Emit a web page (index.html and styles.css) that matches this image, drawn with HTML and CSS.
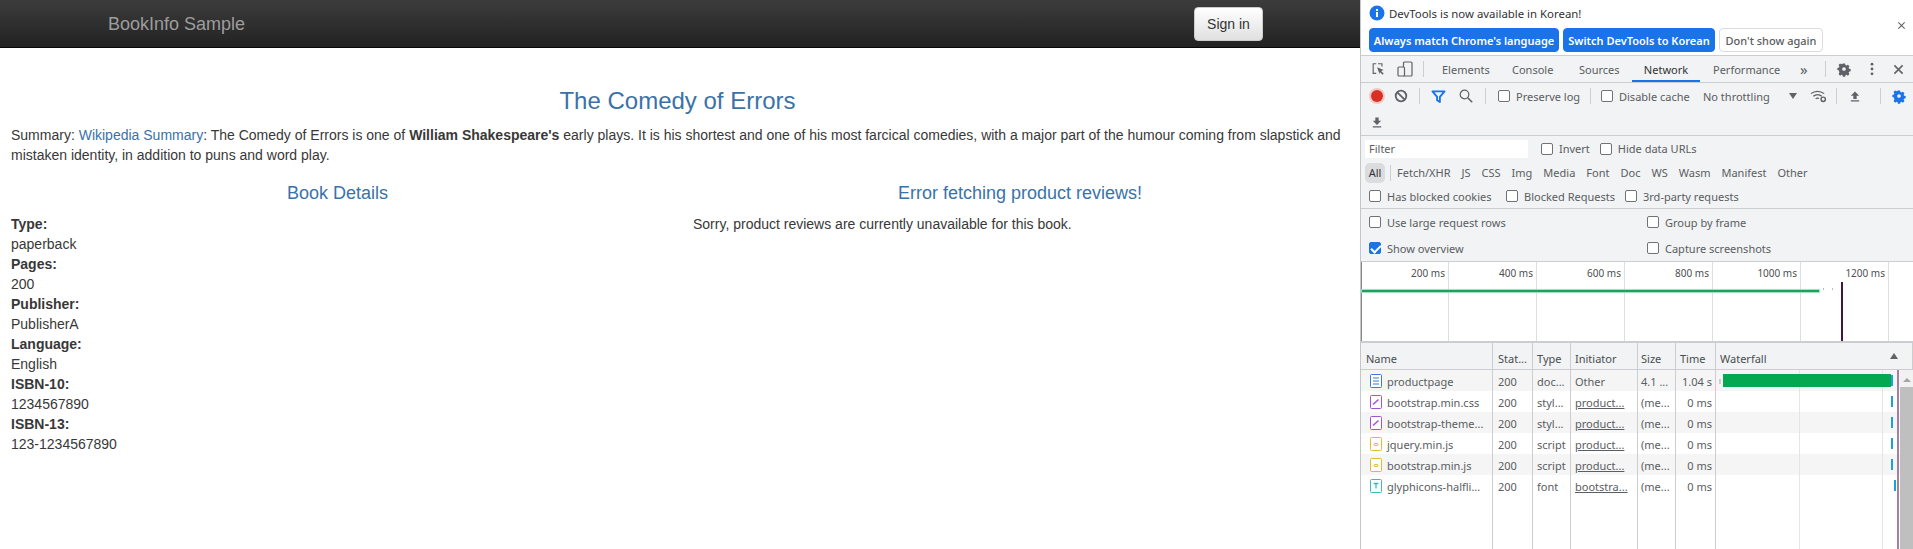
FILE: index.html
```html
<!DOCTYPE html>
<html lang="en">
<head>
<meta charset="utf-8">
<title>Simple Bookstore App</title>
<link rel="stylesheet" href="styles.css">
</head>
<body>
<div class="app">
  <main class="page">
    <nav class="navbar">
      <span class="brand">BookInfo Sample</span>
      <button class="signin">Sign in</button>
    </nav>
    <h3 class="title">The Comedy of Errors</h3>
    <p class="summary">Summary: <a class="link">Wikipedia Summary</a>: The Comedy of Errors is one of <b>William Shakespeare's</b> early plays. It is his shortest and one of his most farcical comedies, with a major part of the humour coming from slapstick and mistaken identity, in addition to puns and word play.</p>
    <div class="cols">
      <section class="col-left">
        <h4 class="sub">Book Details</h4>
        <dl class="details">
          <dt>Type:</dt><dd>paperback</dd>
          <dt>Pages:</dt><dd>200</dd>
          <dt>Publisher:</dt><dd>PublisherA</dd>
          <dt>Language:</dt><dd>English</dd>
          <dt>ISBN-10:</dt><dd>1234567890</dd>
          <dt>ISBN-13:</dt><dd>123-1234567890</dd>
        </dl>
      </section>
      <section class="col-right">
        <h4 class="sub">Error fetching product reviews!</h4>
        <p class="sorry">Sorry, product reviews are currently unavailable for this book.</p>
      </section>
    </div>
  </main>

  <aside class="devtools">
    <div class="infobar">
      <div class="info-line">
        <svg class="ic-info" viewBox="0 0 16 16"><circle cx="8" cy="8" r="7.5" fill="#1a73e8"/><rect x="7" y="7" width="2" height="5" fill="#fff"/><rect x="7" y="4" width="2" height="2" fill="#fff"/></svg>
        <span>DevTools is now available in Korean!</span>
      </div>
      <div class="info-btns">
        <button class="ibtn primary b1">Always match Chrome's language</button>
        <button class="ibtn primary b2">Switch DevTools to Korean</button>
        <button class="ibtn plain">Don't show again</button>
      </div>
      <svg class="info-close" viewBox="0 0 10 10"><path d="M1.5 1.5l7 7M8.5 1.5l-7 7" stroke="#5f6368" stroke-width="1.2" fill="none"/></svg>
    </div>

    <div class="tabs">
      <svg class="ic i-inspect" viewBox="0 0 16 16"><path d="M6 2H2.5v11H6M8 2h4.5v3" fill="none" stroke="#5f6368" stroke-width="1.3"/><path d="M7 6l7.5 3-3 1.2 3 3-1.3 1.3-3-3L9.800 14z" fill="#5f6368"/></svg>
      <svg class="ic i-device" viewBox="0 0 16 16"><rect x="6.500" y="1" width="8.500" height="14" rx="1" fill="none" stroke="#5f6368" stroke-width="1.200"/><rect x="1" y="6" width="6.500" height="9" rx="1" fill="#f1f3f4" stroke="#5f6368" stroke-width="1.200"/></svg>
      <i class="sep s-tabs"></i>
      <span class="tab t1">Elements</span>
      <span class="tab t2">Console</span>
      <span class="tab t3">Sources</span>
      <span class="tab active">Network</span>
      <span class="tab t5">Performance</span>
      <span class="more">»</span>
      <i class="sep s-more"></i>
      <svg class="ic i-gear" viewBox="0 0 16 16"><path fill="#5f6368" fill-rule="evenodd" d="M6.600 1h2.800l.4 2 1.300.6 1.800-1 1.900 2-1 1.700.5 1.300 2 .5v2.800l-2 .4-.5 1.300 1 1.700-1.900 2-1.800-1-1.300.5-.4 2H6.600l-.4-2-1.300-.5-1.800 1-1.900-2 1-1.700L1.700 9.800l-2-.4V6.600l2-.5.500-1.300-1-1.700 1.900-2 1.800 1 1.300-.6zM8 5.700a2.300 2.300 0 1 0 0 4.600 2.300 2.300 0 0 0 0-4.600z" transform="translate(1.600 1.600) scale(.8)"/></svg>
      <svg class="ic i-dots" viewBox="0 0 4 16"><circle cx="2" cy="2.500" r="1.600" fill="#5f6368"/><circle cx="2" cy="8" r="1.600" fill="#5f6368"/><circle cx="2" cy="13.500" r="1.600" fill="#5f6368"/></svg>
      <svg class="ic i-x" viewBox="0 0 12 12"><path d="M1.500 1.500l9 9M10.500 1.500l-9 9" stroke="#5f6368" stroke-width="1.700" fill="none"/></svg>
    </div>

    <div class="toolbar">
      <div class="tb-row">
        <span class="rec"></span>
        <svg class="ic i-clear" viewBox="0 0 14 14"><circle cx="7" cy="7" r="5.300" fill="none" stroke="#5f6368" stroke-width="1.800"/><path d="M3.300 3.300l7.400 7.400" stroke="#5f6368" stroke-width="1.800"/></svg>
        <i class="sep s1"></i>
        <svg class="ic i-filter" viewBox="0 0 16 14"><path d="M1.500 1.500h13L9.500 7.500V13l-3-2V7.500z" fill="none" stroke="#1a73e8" stroke-width="2" stroke-linejoin="round"/></svg>
        <svg class="ic i-search" viewBox="0 0 14 14"><circle cx="5.500" cy="5.500" r="4.300" fill="none" stroke="#5f6368" stroke-width="1.200"/><path d="M8.700 8.700l4.500 4.500" stroke="#5f6368" stroke-width="1.600"/></svg>
        <i class="sep s2"></i>
        <label class="chk c-preserve"><i class="box"></i>Preserve log</label>
        <i class="sep s3"></i>
        <label class="chk c-cache"><i class="box"></i>Disable cache</label>
        <span class="throttle">No throttling</span>
        <span class="caret"></span>
        <svg class="ic i-wifi" viewBox="0 0 18 14"><path d="M1 4.500a11 11 0 0 1 14 0M3.500 7.300a7 7 0 0 1 9 0M6 10a3.300 3.300 0 0 1 3.500-.5" fill="none" stroke="#5f6368" stroke-width="1.300"/><circle cx="14" cy="10.500" r="2.300" fill="none" stroke="#5f6368" stroke-width="1.500"/></svg>
        <i class="sep s4"></i>
        <svg class="ic i-up" viewBox="0 0 12 12"><path d="M6 0L11 5H8v4H4V5H1z M1 10.500h10V12H1z" fill="#5f6368"/></svg>
        <i class="sep s5"></i>
        <svg class="ic i-gearblue" viewBox="0 0 16 16"><path fill="#1a73e8" fill-rule="evenodd" d="M6.600 1h2.800l.4 2 1.300.6 1.800-1 1.900 2-1 1.700.5 1.300 2 .5v2.800l-2 .4-.5 1.300 1 1.700-1.900 2-1.800-1-1.300.5-.4 2H6.600l-.4-2-1.300-.5-1.800 1-1.900-2 1-1.700L1.700 9.800l-2-.4V6.600l2-.5.500-1.300-1-1.700 1.900-2 1.800 1 1.300-.6zM8 5.700a2.300 2.300 0 1 0 0 4.600 2.300 2.300 0 0 0 0-4.600z" transform="translate(1.600 1.600) scale(.8)"/></svg>
      </div>
      <div class="tb-row">
        <svg class="ic i-down" viewBox="0 0 12 12"><path d="M4 0h4v4h3L6 9 1 4h3z M1 10.500h10V12H1z" fill="#5f6368"/></svg>
      </div>
    </div>

    <div class="filters">
      <div class="f-row f-a">
        <span class="filter-input">Filter</span>
        <label class="chk c-invert"><i class="box"></i>Invert</label>
        <label class="chk c-hide"><i class="box"></i>Hide data URLs</label>
      </div>
      <div class="f-row f-b">
        <span class="pill">All</span>
        <i class="sep s-pill"></i>
        <span class="ty">Fetch/XHR</span><span class="ty">JS</span><span class="ty">CSS</span><span class="ty">Img</span><span class="ty">Media</span><span class="ty">Font</span><span class="ty">Doc</span><span class="ty">WS</span><span class="ty">Wasm</span><span class="ty">Manifest</span><span class="ty">Other</span>
      </div>
      <div class="f-row f-c">
        <label class="chk c-cookies"><i class="box"></i>Has blocked cookies</label>
        <label class="chk c-req"><i class="box"></i>Blocked Requests</label>
        <label class="chk"><i class="box"></i>3rd-party requests</label>
      </div>
    </div>

    <div class="settings">
      <label class="chk"><i class="box"></i>Use large request rows</label>
      <label class="chk"><i class="box"></i>Group by frame</label>
      <label class="chk"><i class="box on"></i>Show overview</label>
      <label class="chk"><i class="box"></i>Capture screenshots</label>
    </div>

    <div class="overview">
      <div class="ticks">
        <span>200 ms</span><span>400 ms</span><span>600 ms</span><span>800 ms</span><span>1000 ms</span><span>1200 ms</span>
      </div>
      <i class="ov-green"></i>
      <i class="ov-dot d1"></i><i class="ov-dot d2"></i>
      <i class="ov-line"></i>
    </div>

    <div class="net">
      <div class="row head">
        <span>Name</span><span>Stat...</span><span>Type</span><span>Initiator</span><span>Size</span><span>Time</span>
        <span class="wf">Waterfall<i class="sort"></i></span>
      </div>
      <div class="row odd">
        <span class="nm"><svg class="fi" viewBox="0 0 12 14"><rect x=".5" y=".5" width="11" height="13" rx="1" fill="#fff" stroke="#3b78d8"/><path d="M3 4h6M3 7h6M3 10h6" stroke="#3b78d8"/></svg>productpage</span><span>200</span><span>doc...</span><span>Other</span><span>4.1 ...</span><span class="tm">1.04 s</span><span></span>
      </div>
      <div class="row">
        <span class="nm"><svg class="fi" viewBox="0 0 12 14"><rect x=".5" y=".5" width="11" height="13" rx="1" fill="#fff" stroke="#a254d9"/><path d="M3 9.500L8.500 4.500" stroke="#a254d9" stroke-width="1.500"/></svg>bootstrap.min.css</span><span>200</span><span>styl...</span><span><u>product...</u></span><span>(me...</span><span class="tm">0 ms</span><span></span>
      </div>
      <div class="row odd">
        <span class="nm"><svg class="fi" viewBox="0 0 12 14"><rect x=".5" y=".5" width="11" height="13" rx="1" fill="#fff" stroke="#a254d9"/><path d="M3 9.500L8.500 4.500" stroke="#a254d9" stroke-width="1.500"/></svg>bootstrap-theme...</span><span>200</span><span>styl...</span><span><u>product...</u></span><span>(me...</span><span class="tm">0 ms</span><span></span>
      </div>
      <div class="row">
        <span class="nm"><svg class="fi" viewBox="0 0 12 14"><rect x=".5" y=".5" width="11" height="13" rx="1" fill="#fff" stroke="#e8b33f"/><rect x="4" y="6.500" width="4" height="2" rx="1" fill="none" stroke="#e8b33f"/></svg>jquery.min.js</span><span>200</span><span>script</span><span><u>product...</u></span><span>(me...</span><span class="tm">0 ms</span><span></span>
      </div>
      <div class="row odd">
        <span class="nm"><svg class="fi" viewBox="0 0 12 14"><rect x=".5" y=".5" width="11" height="13" rx="1" fill="#fff" stroke="#e8b33f"/><rect x="4" y="6.500" width="4" height="2" rx="1" fill="none" stroke="#e8b33f"/></svg>bootstrap.min.js</span><span>200</span><span>script</span><span><u>product...</u></span><span>(me...</span><span class="tm">0 ms</span><span></span>
      </div>
      <div class="row">
        <span class="nm"><svg class="fi" viewBox="0 0 12 14"><rect x=".5" y=".5" width="11" height="13" rx="1" fill="#fff" stroke="#3cb8c8"/><path d="M3.500 4.500h5M6 4.500v5" stroke="#3cb8c8" stroke-width="1.300"/></svg>glyphicons-halfli...</span><span>200</span><span>font</span><span><u>bootstra...</u></span><span>(me...</span><span class="tm">0 ms</span><span></span>
      </div>
      <div class="row filler"><span></span><span></span><span></span><span></span><span></span><span></span><span></span></div>

      <div class="wf-layer">
        <i class="wf-grid g1"></i><i class="wf-grid g2"></i>
        <i class="wf-wait"></i>
        <i class="wf-green"></i>
        <i class="wf-blue b1"></i><i class="wf-blue b2"></i><i class="wf-blue b3"></i><i class="wf-blue b4"></i><i class="wf-blue b5"></i><i class="wf-blue b6"></i>
        <i class="wf-load"></i>
      </div>
      <div class="scrollbar"><i class="sb-up"></i><i class="sb-thumb"></i></div>
    </div>
  </aside>
</div>
</body>
</html>
```

FILE: styles.css
```css
* { box-sizing: border-box; }
html, body { margin: 0; padding: 0; height: 100%; overflow: hidden; background: #fff; }
.app { display: flex; height: 549px; }

/* Page */
.page { width: 1360px; flex: none; font: 14px/20px "Liberation Sans", Arial, sans-serif; color: #383838; }
.navbar { height: 48px; display: flex; align-items: center; justify-content: space-between; padding: 0 97px 0 108px; background: linear-gradient(to bottom, #3c3c3c, #222); border-bottom: 1px solid #080808; }
.brand { font-size: 18px; color: #9d9d9d; }
.signin { width: 69px; height: 34px; font: 14px "Liberation Sans", Arial, sans-serif; color: #333; background: linear-gradient(to bottom, #fff, #e0e0e0); border: 1px solid #ccc; border-radius: 4px; padding: 0; }
.title { margin: 40px 0 11px; padding-right: 5px; font-size: 24px; line-height: 26px; font-weight: 500; color: #3a72a8; text-align: center; }
.summary { margin: 0 11px 0 11px; }
.link { color: #3a72a8; }
.cols { display: flex; margin-top: 18px; }
.col-left { width: 675px; padding-left: 11px; }
.col-right { flex: 1; padding-left: 18px; padding-right: 0; margin-left: 0; }
.sub { margin: 0 0 11px; font-size: 18px; line-height: 20px; font-weight: 500; color: #3a72a8; text-align: center; }
.col-left .sub { padding-right: 11px; }
.col-right .sub { padding-right: 13px; }
.details { margin: 0; }
.details dt { font-weight: 700; }
.details dd { margin: 0; }
.sorry { margin: 0; }

/* DevTools */
.devtools { position: relative; width: 553px; flex: none; border-left: 1px solid #c4c6c9; font: 11px/14px "Noto Sans", "Open Sans", sans-serif; color: #5a5d61; background: #fff; }
.ic { display: block; flex: none; }
.sep { display: block; flex: none; width: 1px; height: 16px; background: #ccced1; }

.infobar { position: relative; height: 56px; background: #fff; border-bottom: 1px solid #cbcdd0; padding: 4px 0 0 8px; color: #303235; }
.info-line { display: flex; align-items: center; gap: 4px; height: 18px; font-size: 11.4px; }
.info-line span { padding-top: 2px; }
.ic-info { width: 16px; height: 16px; }
.info-btns { display: flex; margin-top: 6px; gap: 4px; }
.ibtn { height: 24px; padding: 0; border-radius: 4px; font: 600 11px "Noto Sans", "Open Sans", sans-serif; border: 1px solid #1a73e8; background: #1a73e8; color: #fff; white-space: nowrap; }
.ibtn.b1 { width: 190px; }
.ibtn.b2 { width: 152px; }
.ibtn.plain { width: 104px; background: #fff; color: #5a5d61; border-color: #dadce0; font-weight: 500; }
.info-close { position: absolute; right: 7px; top: 21px; width: 9px; height: 9px; }

.tabs { height: 27px; display: flex; align-items: center; background: #f1f3f4; border-bottom: 1px solid #cbcdd0; }
.i-inspect { width: 14px; height: 14px; margin-left: 10px; }
.i-device { width: 16px; height: 16px; margin-left: 12px; }
.s-tabs { margin-left: 10px; }
.tab { margin-left: 0; padding-top: 2px; white-space: nowrap; color: #5a5d61; }
.t1 { margin-left: 18px; width: 70px; }
.t2 { width: 67px; }
.t3 { width: 53px; }
.tab.active { width: 68px; height: 26px; padding-top: 0; line-height: 27px; color: #333; text-align: center; border-bottom: 2px solid #1a73e8; }
.t5 { margin-left: 13px; width: 87px; }
.more { width: 25px; font-size: 15px; line-height: 14px; color: #5a5d61; }
.i-gear { width: 16px; height: 16px; margin-left: 10px; }
.i-dots { width: 4px; height: 14px; margin-left: 18px; }
.i-x { width: 11px; height: 11px; margin-left: 19px; }

.toolbar { height: 53px; background: #f1f3f4; border-bottom: 1px solid #cbcdd0; }
.tb-row { height: 26px; display: flex; align-items: center; }
.rec { width: 12px; height: 12px; margin-left: 10px; border-radius: 50%; background: #d93025; box-shadow: 0 0 0 2px #f3c8c5; }
.i-clear { width: 14px; height: 14px; margin-left: 11px; }
.s1 { margin-left: 11px; }
.i-filter { width: 15px; height: 13px; margin-left: 11px; }
.i-search { width: 14px; height: 14px; margin-left: 13px; }
.s2 { margin-left: 12px; }
.chk { display: flex; align-items: center; white-space: nowrap; }
.box { display: block; flex: none; width: 12px; height: 12px; margin-right: 6px; border: 1px solid #6f7377; border-radius: 2px; background: #fff; }
.box.on { position: relative; background: #1a73e8; border-color: #1a73e8; }
.box.on::after { content: ""; position: absolute; left: 3px; top: 0; width: 4px; height: 8px; border: solid #fff; border-width: 0 2px 2px 0; transform: rotate(45deg); }
.tb-row .chk, .f-c .chk, .settings .chk { padding-top: 2px; }
.tb-row .box, .f-c .box, .settings .box { margin-top: -2px; }
.c-preserve { margin-left: 12px; width: 82px; }
.s3 { margin-left: 10px; }
.c-cache { margin-left: 10px; width: 90px; }
.throttle { margin-left: 12px; width: 86px; padding-top: 2px; }
.caret { width: 0; height: 0; border: 4px solid transparent; border-top: 6px solid #5f6368; border-bottom: 0; }
.i-wifi { width: 17px; height: 14px; margin-left: 13px; }
.s4 { margin-left: 9px; }
.i-up { width: 10px; height: 11px; margin-left: 13px; }
.s5 { margin-left: 20px; }
.i-gearblue { width: 16px; height: 16px; margin-left: 10px; }
.i-down { width: 10px; height: 11px; margin-left: 11px; }

.filters { height: 73px; background: #f1f3f4; border-bottom: 1px solid #cbcdd0; }
.f-row { display: flex; align-items: center; }
.f-a { height: 25px; }
.f-b { height: 23px; }
.f-c { height: 24px; padding-left: 8px; }
.filter-input { width: 163px; height: 18px; margin-left: 4px; padding-left: 4px; line-height: 18px; background: #fff; }
.c-invert { margin-left: 13px; }
.c-hide { margin-left: 10px; }
.pill { margin-left: 4px; width: 20px; height: 20px; line-height: 20px; text-align: center; border-radius: 5px; background: #dadce0; color: #333; }
.s-pill { margin: 0 0 0 5px; }
.ty { margin-left: 11px; }
.s-pill + .ty { margin-left: 6px; }
.c-cookies { width: 137px; }
.c-req { width: 119px; }

.settings { height: 53px; display: grid; grid-template-columns: 278px 1fr; grid-auto-rows: 26px; align-items: center; padding-left: 8px; background: #f1f3f4; border-bottom: 1px solid #cbcdd0; }

.overview { position: relative; height: 81px; background: #fff; border-bottom: 2px solid #cbcdd0; }
.ticks { display: flex; height: 79px; padding-left: 87px; border-left: 1px solid #888; background-clip: padding-box; }
.ticks span { width: 88px; margin-left: 0; padding: 5px 3px 0 0; text-align: right; font-size: 10px; line-height: 12px; color: #4d4f52; border-right: 1px solid #dcdee0; }
.ticks span:first-child { margin-left: -87px; width: 87px; }
.ov-green { position: absolute; left: 1px; top: 28px; width: 457px; height: 2px; background: #1aa260; box-shadow: 0 0 1px 1px #9fdcbc; }
.ov-dot { position: absolute; top: 26px; width: 1px; height: 2px; background: #bbb; }
.d1 { left: 462px; }
.d2 { left: 471px; }
.ov-line { position: absolute; left: 480px; top: 20px; width: 2px; height: 59px; background: #45143f; }

.net { position: relative; height: 206px; background: #fff; }
.row { display: grid; grid-template-columns: 132px 40px 38px 67px 38px 40px 1fr; height: 21px; line-height: 21px; white-space: nowrap; }
.row > span { padding: 1px 0 0 5px; border-right: 1px solid #dfe1e3; overflow: hidden; }
.row > span:nth-child(n+3) { padding-left: 4px; }
.row > span:nth-child(5) { padding-left: 3px; }
.row > span:last-child { border-right: 0; }
.row.odd { background: #f5f5f5; }
.row.head { height: 27px; line-height: 26px; background: #f1f3f4; border-bottom: 1px solid #cbcdd0; color: #4a4d50; }
.row.head > span { padding-top: 3px; border-right: 1px solid #cbcdd0; }
.row.filler { height: 53px; }
.row.filler > span { border-right: 1px solid #cbcdd0; }
.row:not(.head) > span:nth-child(-n+6) { border-right-color: #cbcdd0; }
.row > .tm { text-align: right; padding-right: 3px; }
.nm { display: flex; align-items: center; gap: 5px; padding-left: 9px !important; }
.fi { width: 12px; height: 14px; flex: none; }
.wf { position: relative; }
.sort { position: absolute; right: 14px; top: 10px; width: 0; height: 0; border: 4px solid transparent; border-bottom: 6px solid #5f6368; border-top: 0; }

.wf-layer { position: absolute; left: 354px; top: 27px; bottom: 0; right: 14px; }
.wf-grid { position: absolute; top: 0; bottom: 0; width: 1px; background: #e4e5e7; }
.g1 { left: 84px; }
.g2 { left: 167px; }
.wf-wait { position: absolute; left: 4px; top: 9px; width: 2px; height: 5px; background: #ccc; }
.wf-green { position: absolute; left: 8px; top: 4px; width: 168px; height: 13px; background: #04a84e; }
.wf-blue { position: absolute; left: 176px; width: 2px; background: #1da1d8; }
.wf-blue.b1 { top: 5px; height: 11px; }
.wf-blue.b2 { top: 26px; height: 11px; }
.wf-blue.b3 { top: 47px; height: 11px; }
.wf-blue.b4 { top: 68px; height: 11px; }
.wf-blue.b5 { top: 89px; height: 11px; }
.wf-blue.b6 { top: 110px; height: 11px; left: 179px; }
.wf-load { position: absolute; left: 182px; top: 0; bottom: 0; width: 2px; background: #a680a0; }
.scrollbar { position: absolute; right: 0; top: 27px; bottom: 0; width: 13px; background: #f1f1f1; }
.sb-up { position: absolute; left: 3px; top: 8px; width: 0; height: 0; border: 4px solid transparent; border-bottom: 4px solid #a3a3a3; border-top: 0; }
.sb-thumb { position: absolute; left: 0; top: 17px; bottom: 0; width: 13px; background: #bfbfbf; }
```
